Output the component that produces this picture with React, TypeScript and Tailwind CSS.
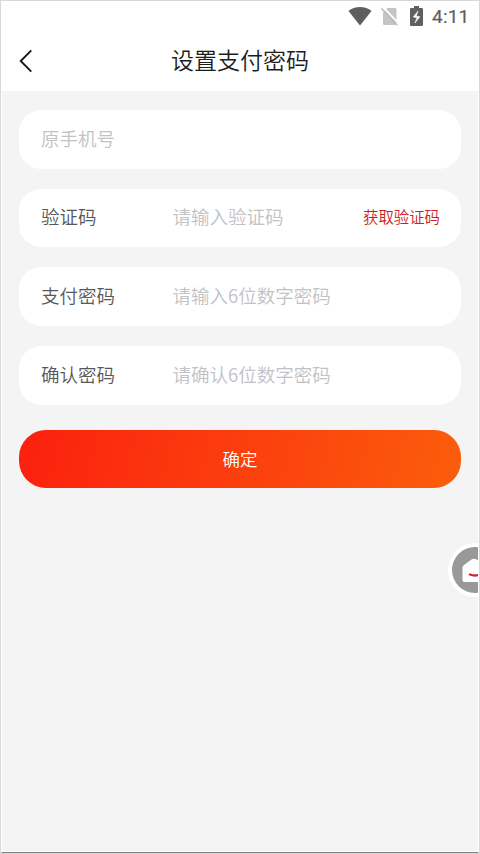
import React from "react";

type FieldProps = { label?: string; placeholder: string; action?: string };

function Field({ label, placeholder, action }: FieldProps) {
  return (
    <div className="flex h-[58.500px] items-center rounded-[22px] bg-white px-[22px] pb-[3px] text-[18.5px] leading-none">
      {label && <label className="w-[131.500px] text-[#58585a]">{label}</label>}
      <span className="flex-1 text-[#c1c2c5]">{placeholder}</span>
      {action && <button className="-mr-px text-[15.4px] font-[350] leading-none text-[#cc2222]">{action}</button>}
    </div>
  );
}

function StatusBar() {
  return (
    <div className="flex h-[30px] items-center justify-end pr-[10px] text-[#5f5f5f]">
      <svg width="24" height="20" viewBox="0 0 24 20" fill="currentColor">
        <path d="M.500 5C3.700 2.400 7.500 1.100 12 1.100S20.300 2.400 23.500 5L12 19.500Z" />
      </svg>
      <svg className="ml-[9px]" width="18" height="20" viewBox="0 0 18 20">
        <path d="M6.500 2h7.500q1.500 0 1.500 1.500v14q0 1.500-1.500 1.500h-10.500Q2 19 2 17.500V6.500Z" fill="#c4c4c4" />
        <path d="M1.800 .800 18 17.800" stroke="#fff" strokeWidth="1.800" />
        <path d="M.500 2.300 16.300 19.300" stroke="#bcbcbc" strokeWidth="1.600" />
      </svg>
      <svg className="ml-[11px]" width="13" height="20" viewBox="0 0 13 20" fill="currentColor">
        <path d="M4 0h5v2h2.700Q13 2 13 3.300v15.400Q13 20 11.700 20H1.300Q0 20 0 18.700V3.300Q0 2 1.300 2H4Z" />
        <path d="M8 5 3.200 11 7 11.800 4.800 17 10 10.800 6.300 10Z" fill="#fff" stroke="#fff" strokeWidth=".5" />
      </svg>
      <span className="ml-[9px] w-[36px] whitespace-nowrap font-['Roboto'] text-[19px] font-normal leading-none tracking-[0.2px] [-webkit-text-stroke:0.2px_currentColor]">4:11</span>
    </div>
  );
}

export default function App() {
  return (
    <div className="h-[854px] w-[480px] overflow-hidden border border-[#d8d8d8] font-['Noto_Sans_CJK_SC',sans-serif] font-[350]">
      <main className="relative h-[852px] overflow-hidden border-x border-b border-x-white border-b-[#7c8078] bg-[#f4f4f4]">
        <header className="h-[90px] bg-white">
          <StatusBar />
          <div className="grid h-[60px] grid-cols-[48px_1fr_48px] items-center">
            <button className="pl-[17px]" aria-label="返回">
              <svg width="14" height="24" viewBox="0 0 14 24" fill="none" stroke="#181818" strokeWidth="1.900">
                <path d="M12.300 1.300 1.700 12l10.600 10.700" />
              </svg>
            </button>
            <h1 className="pb-[4px] text-center text-[23px] font-[350] leading-none text-[#1c1c1c]">设置支付密码</h1>
          </div>
        </header>
        <form className="flex flex-col gap-[20.2px] px-[17px] pt-[19px]">
          <Field placeholder="原手机号" />
          <Field label="验证码" placeholder="请输入验证码" action="获取验证码" />
          <Field label="支付密码" placeholder="请输入6位数字密码" />
          <Field label="确认密码" placeholder="请确认6位数字密码" />
          <button type="button" className="mt-[5.500px] h-[57.500px] rounded-[27px] bg-linear-[105deg,#fb200f,#fb5d0c] pb-[1px] text-[17.5px] leading-none text-white">
            确定
          </button>
        </form>
        <button className="absolute left-[446px] top-[542px]" aria-label="首页">
          <svg width="54" height="54" viewBox="0 0 54 54">
            <circle cx="27" cy="27" r="27" fill="#fff" />
            <circle cx="27" cy="27" r="23" fill="#999" />
            <path d="M14.500 37V25Q14.500 23 16 22L23.500 16.500Q26 15 28.500 16.500L36 22Q37.500 23 37.500 25V37Q37.500 39 35.500 39H16.500Q14.500 39 14.500 37Z" fill="#fff" />
            <path d="M22 31.500Q27 33.500 32 31.500" fill="none" stroke="#d62331" strokeWidth="2.400" strokeLinecap="round" />
          </svg>
        </button>
        <div className="absolute inset-x-0 bottom-0 h-px bg-white" />
      </main>
    </div>
  );
}
